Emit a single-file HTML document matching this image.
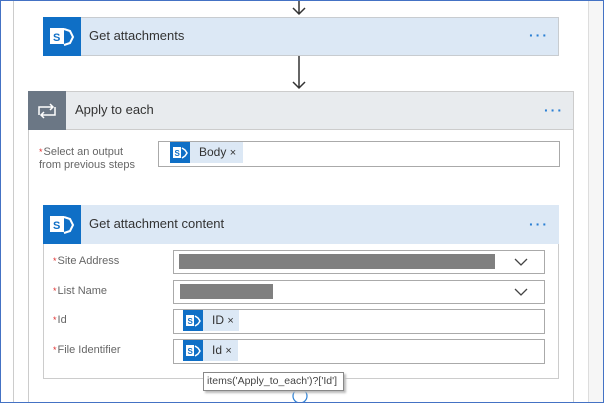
<!DOCTYPE html><html style="overflow:hidden;width:604px;height:403px"><head><style>
*{margin:0;padding:0;box-sizing:border-box}
body{width:604px;height:403px;overflow:hidden;background:#fff;font-family:"Segoe UI","Liberation Sans",sans-serif;position:relative;color:#333}
.a{position:absolute}
.ic{position:absolute;background:#0f6fc6}
.lbl{position:absolute;font-size:11px;color:#666}
.lbl b{color:#e03030;font-weight:normal;font-size:9px;margin-right:1px}
.box{position:absolute;border:1px solid #aaa;background:#fff}
.dots{position:absolute;color:#2a7fd4;font-size:14px;letter-spacing:2px;font-weight:bold}
.tok{position:absolute;background:#dce8f5;height:21px;font-size:12px;line-height:21px;white-space:nowrap}
.tok .ti{position:absolute;left:0;top:0;width:20px;height:21px;background:#0f6fc6}
.tok svg{position:absolute;left:3px;top:4px}
</style></head><body>
<div class="a" style="left:13px;top:1px;width:1px;height:401px;background:#ccc"></div>
<div class="a" style="left:588px;top:1px;width:1px;height:401px;background:#ddd"></div>
<div class="a" style="left:589px;top:1px;width:14px;height:401px;background:#f6f6f6"></div>
<svg class="a" style="left:0;top:0" width="604" height="403">
<path d="M299 0V14M293 8L299 14L305 8" stroke="#333" stroke-width="1.5" fill="none"/>
<path d="M299 56V88M293 82L299 88L305 82" stroke="#333" stroke-width="1.5" fill="none"/>
</svg>
<!-- Get attachments -->
<div class="a" style="left:43px;top:17px;width:516px;height:39px;background:#dce8f5;border:1px solid #c8ccd0"></div>
<div class="ic" style="left:43px;top:17px;width:38px;height:39px"></div>
<svg class="a" style="left:49px;top:25px" width="28" height="24"><rect x="1" y="3" width="14" height="16" fill="#fff"/><text x="4" y="16" font-size="11" font-weight="bold" fill="#0f6fc6" font-family="Liberation Sans">S</text><path d="M15 4L21 6L24 12L21 18L15 20" stroke="#fff" stroke-width="2" fill="none"/></svg>
<div class="a" style="left:89px;top:28px;font-size:13px">Get attachments</div>
<div class="dots" style="left:529px;top:27px">···</div>
<!-- Apply to each -->
<div class="a" style="left:28px;top:91px;width:546px;height:320px;border:1px solid #ccc"></div>
<div class="a" style="left:28px;top:91px;width:546px;height:39px;background:#e8ebee;border:1px solid #ccc"></div>
<div class="a" style="left:28px;top:91px;width:38px;height:39px;background:#6b7785"></div>
<svg class="a" style="left:36px;top:101px" width="22" height="20"><path d="M3 14V6H17M14 3L17 6L14 9M19 6V14H5M8 17L5 14L8 11" stroke="#fff" stroke-width="1.5" fill="none"/></svg>
<div class="a" style="left:75px;top:102px;font-size:13px">Apply to each</div>
<div class="dots" style="left:544px;top:102px">···</div>
<div class="lbl" style="left:39px;top:146px;line-height:13px"><b>*</b>Select an output<br>from previous steps</div>
<div class="box" style="left:158px;top:141px;width:402px;height:26px"></div>
<div class="tok" style="left:170px;top:142px;width:73px"><div class="ti"></div><svg width="15" height="13"><rect x="0" y="1" width="8" height="11" fill="#fff"/><text x="1.5" y="10" font-size="8" font-weight="bold" fill="#0f6fc6" font-family="Liberation Sans">S</text><path d="M9 2L12 4L14 7L12 10L9 12" stroke="#fff" stroke-width="1.5" fill="none"/></svg><span style="position:absolute;left:29px">Body <span style="font-size:11px">×</span></span></div>
<!-- Get attachment content -->
<div class="a" style="left:43px;top:205px;width:516px;height:174px;border:1px solid #ccc;background:#fff"></div>
<div class="a" style="left:43px;top:205px;width:516px;height:39px;background:#dce8f5"></div>
<div class="ic" style="left:43px;top:205px;width:38px;height:39px"></div>
<svg class="a" style="left:49px;top:213px" width="28" height="24"><rect x="1" y="3" width="14" height="16" fill="#fff"/><text x="4" y="16" font-size="11" font-weight="bold" fill="#0f6fc6" font-family="Liberation Sans">S</text><path d="M15 4L21 6L24 12L21 18L15 20" stroke="#fff" stroke-width="2" fill="none"/></svg>
<div class="a" style="left:89px;top:216px;font-size:13px">Get attachment content</div>
<div class="dots" style="left:529px;top:216px">···</div>
<div class="lbl" style="left:53px;top:255px"><b>*</b>Site Address</div>
<div class="lbl" style="left:53px;top:285px"><b>*</b>List Name</div>
<div class="lbl" style="left:53px;top:314px"><b>*</b>Id</div>
<div class="lbl" style="left:53px;top:344px"><b>*</b>File Identifier</div>
<div class="box" style="left:173px;top:250px;width:372px;height:24px"></div>
<div class="box" style="left:173px;top:280px;width:372px;height:24px"></div>
<div class="box" style="left:173px;top:309px;width:372px;height:25px"></div>
<div class="box" style="left:173px;top:339px;width:372px;height:25px"></div>
<div class="a" style="left:179px;top:254px;width:316px;height:15px;background:#808080"></div>
<div class="a" style="left:180px;top:284px;width:93px;height:15px;background:#808080"></div>
<svg class="a" style="left:514px;top:255px" width="16" height="45"><path d="M1 4L7 10L13 4M1 34L7 40L13 34" stroke="#444" stroke-width="1.3" fill="none"/></svg>
<div class="tok" style="left:183px;top:310px;width:56px"><div class="ti"></div><svg width="15" height="13"><rect x="0" y="1" width="8" height="11" fill="#fff"/><text x="1.5" y="10" font-size="8" font-weight="bold" fill="#0f6fc6" font-family="Liberation Sans">S</text><path d="M9 2L12 4L14 7L12 10L9 12" stroke="#fff" stroke-width="1.5" fill="none"/></svg><span style="position:absolute;left:29px">ID <span style="font-size:11px">×</span></span></div>
<div class="tok" style="left:183px;top:340px;width:55px"><div class="ti"></div><svg width="15" height="13"><rect x="0" y="1" width="8" height="11" fill="#fff"/><text x="1.5" y="10" font-size="8" font-weight="bold" fill="#0f6fc6" font-family="Liberation Sans">S</text><path d="M9 2L12 4L14 7L12 10L9 12" stroke="#fff" stroke-width="1.5" fill="none"/></svg><span style="position:absolute;left:29px">Id <span style="font-size:11px">×</span></span></div>
<svg class="a" style="left:290px;top:386px" width="20" height="17"><circle cx="10" cy="10" r="7" fill="#fff" stroke="#2a7fd4" stroke-width="1.2"/></svg>
<div class="a" style="left:203px;top:372px;width:141px;height:19px;background:#fff;border:1px solid #888;box-shadow:2px 2px 2px #bbb;font-size:10.5px;line-height:17px;padding-left:3px;color:#444;white-space:nowrap;overflow:hidden">items('Apply_to_each')?['Id']</div>
<div class="a" style="left:0;top:0;width:604px;height:403px;border:1px solid #4472c4"></div>
</body></html>
